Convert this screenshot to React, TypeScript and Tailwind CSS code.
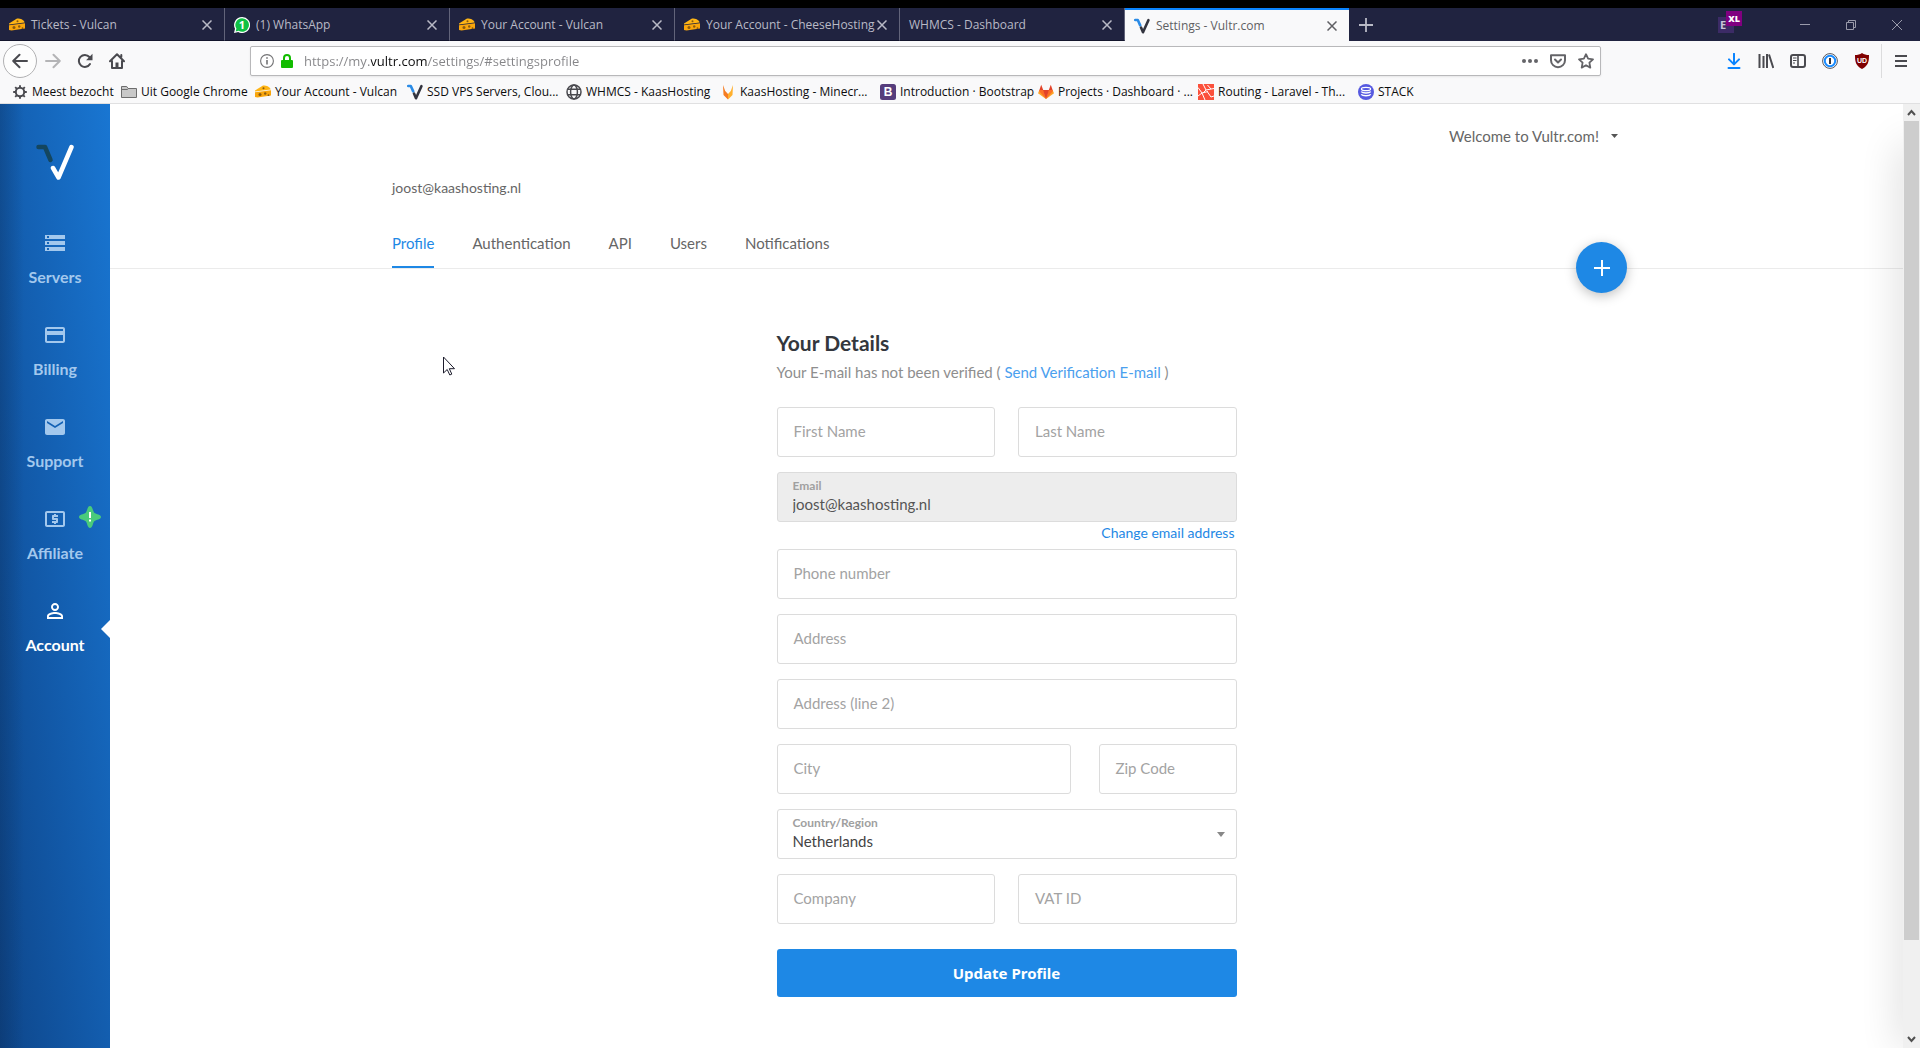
import type { ReactNode } from "react"
import { MdCreditCard, MdEmail, MdLocalAtm, MdPersonOutline, MdStorage } from "react-icons/md"

function CheeseIcon() {
    return (
        <svg viewBox="0 0 16 16" className="h-4 w-4 shrink-0">
            <path d="M0 6.5 8 1.5c4 0 7 1.5 7.6 4L0 7.5z" fill="#ffb515" />
            <path d="M0 8.2 16 6.2v5.3L2.5 13.6 0 13z" fill="#f9a60c" />
            <circle cx="8.5" cy="4.3" r="1" fill="#8a5a10" />
            <circle cx="5" cy="10.6" r="1.5" fill="#8a5a10" />
            <circle cx="10.2" cy="9.5" r="1.2" fill="#8a5a10" />
            <circle cx="13.5" cy="11.2" r="0.9" fill="#8a5a10" />
        </svg>
    )
}

function WhatsAppIcon() {
    return (
        <svg viewBox="0 0 16 16" className="h-4 w-4 shrink-0">
            <path d="M8 0a8 8 0 1 1-3.8 15L0 16l1-4.2A8 8 0 0 1 8 0z" fill="#fff" />
            <path d="M8 1.2a6.8 6.8 0 1 1-3.4 12.6L1.7 14.4l.7-2.8A6.8 6.8 0 0 1 8 1.2z" fill="#0fc144" />
            <text x="8" y="12" textAnchor="middle" fontSize="11" fontWeight="700" fill="#fff" fontFamily="Open Sans, sans-serif">1</text>
        </svg>
    )
}

function VultrIcon() {
    return (
        <svg viewBox="0 0 16 16" className="h-4 w-4 shrink-0" fill="none" strokeWidth="2.6" strokeLinecap="round" strokeLinejoin="round">
            <path d="M1.2 2h2.6l2.4 5.4" stroke="#2a8be6" />
            <path d="M7 9.6l2 4.6 5.4-12" stroke="#33343f" />
        </svg>
    )
}

function GearIcon() {
    return (
        <svg viewBox="0 0 16 16" className="h-4 w-4 shrink-0" fill="none" stroke="#4a4a4f">
            <circle cx="8" cy="8" r="4.2" strokeWidth="2" />
            <path d="M8 1.2v2.4M8 12.4v2.4M1.2 8h2.4M12.4 8h2.4M3.2 3.2l1.7 1.7M11.1 11.1l1.7 1.7M3.2 12.8l1.7-1.7M11.1 4.9l1.7-1.7" strokeWidth="1.9" />
        </svg>
    )
}

function FolderIcon() {
    return (
        <svg viewBox="0 0 16 16" className="h-4 w-4 shrink-0" fill="#c8c8c8" stroke="#6d6d6d">
            <path d="M.5 13.5v-11h5.2l1.4 2h8.4v9z" />
            <path d="M.5 5.5h6l1-1" fill="none" />
        </svg>
    )
}

function GlobeIcon() {
    return (
        <svg viewBox="0 0 16 16" className="h-4 w-4 shrink-0" fill="none" stroke="#4a4a4f" strokeWidth="1.5">
            <circle cx="8" cy="8" r="7" />
            <ellipse cx="8" cy="8" rx="3.4" ry="7" />
            <path d="M1.6 5.2h12.8M1.6 10.8h12.8" />
        </svg>
    )
}

function FoxIcon() {
    return (
        <svg viewBox="0 0 16 16" className="h-4 w-4 shrink-0">
            <path d="M3 1l2.2 6L8 10v5.5L3.5 11z" fill="#f57c22" />
            <path d="M13 1l-2.2 6L8 10v5.5l4.5-4.5z" fill="#ffb02e" />
        </svg>
    )
}

function BootstrapIcon() {
    return (
        <svg viewBox="0 0 16 16" className="h-4 w-4 shrink-0">
            <rect width="16" height="16" rx="2.5" fill="#563d7c" />
            <text x="8" y="12.4" textAnchor="middle" fontSize="12" fontWeight="700" fill="#fff" fontFamily="Liberation Sans, sans-serif">B</text>
        </svg>
    )
}

function GitlabIcon() {
    return (
        <svg viewBox="0 0 16 16" className="h-4 w-4 shrink-0">
            <path d="M0 9.2 1.4 6h13.2L16 9.2 8 15z" fill="#fca326" />
            <path d="M1.4 6h3.8L8 15 1 7z" fill="#fc6d26" />
            <path d="M14.6 6h-3.8L8 15l7-8z" fill="#fc6d26" />
            <path d="M5 6h6l-3 9zM1.4 6 3.2.8 5.2 6zM14.6 6 12.8.8 10.8 6z" fill="#e24329" />
        </svg>
    )
}

function LaravelIcon() {
    return (
        <svg viewBox="0 0 16 16" className="h-4 w-4 shrink-0">
            <rect width="16" height="16" fill="#fb503b" />
            <path d="M0 3.5 4 9l6-1.5M5 0l3 6 8-1.5M4 9l3 7M9.5 8l3.5 5 3-1M0 12l4-3M8 6l-3 3M9.5 1 13 5" fill="none" stroke="#fff" />
        </svg>
    )
}

function StackIcon() {
    return (
        <svg viewBox="0 0 16 16" className="h-4 w-4 shrink-0">
            <circle cx="8" cy="8" r="8" fill="#5659e0" />
            <ellipse cx="8" cy="5" rx="4.6" ry="1.7" fill="none" stroke="#fff" strokeWidth="1.2" />
            <path d="M3.2 7.6c1.5 1.8 8.1 1.8 9.6 0M3.2 10.4c1.5 1.8 8.1 1.8 9.6 0" fill="none" stroke="#fff" strokeWidth="1.4" />
        </svg>
    )
}

function CloseIcon() {
    return (
        <svg viewBox="0 0 10 10" className="h-[10px] w-[10px]" fill="none" stroke="currentColor" strokeWidth="1.5">
            <path d="M.5.5l9 9M9.5.5l-9 9" />
        </svg>
    )
}

interface BrowserTab {
    title: string
    icon?: ReactNode
    active?: boolean
}

const browserTabs: BrowserTab[] = [
    { title: "Tickets - Vulcan", icon: <CheeseIcon /> },
    { title: "(1) WhatsApp", icon: <WhatsAppIcon /> },
    { title: "Your Account - Vulcan", icon: <CheeseIcon /> },
    { title: "Your Account - CheeseHosting", icon: <CheeseIcon /> },
    { title: "WHMCS - Dashboard" },
    { title: "Settings - Vultr.com", icon: <VultrIcon />, active: true },
]

function TabStrip() {
    return (
        <div className="flex h-[33px] bg-[#202340] text-[#b9bac6]">
            {browserTabs.map((tab) => (
                <div
                    key={tab.title}
                    className={
                        tab.active
                            ? "flex w-56 items-center border-t-2 border-[#0a84ff] bg-[#f9f9fa] pr-3 pl-[9px] text-[#5f5f63]"
                            : "flex w-[225px] items-center border-r border-r-[#62647a] border-b border-b-[#12142b] pt-0.5 pr-3 pl-[9px]"
                    }
                >
                    {tab.icon && <span className="mr-1.5">{tab.icon}</span>}
                    <span className="flex-1 text-xs whitespace-nowrap">{tab.title}</span>
                    <button aria-label="Close tab"><CloseIcon /></button>
                </div>
            ))}
            <button aria-label="New tab" className="ml-[10px] self-center">
                <svg viewBox="0 0 14 14" className="h-[14px] w-[14px]" stroke="currentColor" strokeWidth="1.8">
                    <path d="M7 0v14M0 7h14" />
                </svg>
            </button>

            <div className="ml-auto flex items-center pr-[18px]">
                <div className="relative mr-[66px] h-4 w-4 bg-[#3c2b66]">
                    <span className="block pl-0.5 text-[11px] leading-4 font-bold text-[#c9c4d8]">E</span>
                    <span className="absolute -top-1.5 left-2 h-[15px] w-4 bg-[#800080] text-center text-[9px] leading-[15px] font-extrabold text-white">XL</span>
                </div>
                <div className="flex items-center gap-9 text-[#9a9bab]">
                    <button aria-label="Minimize">
                        <svg viewBox="0 0 10 10" className="h-[10px] w-[10px]" stroke="currentColor"><path d="M0 4.5h10" /></svg>
                    </button>
                    <button aria-label="Restore">
                        <svg viewBox="0 0 10 10" className="h-[10px] w-[10px]" fill="none" stroke="currentColor"><path d="M.5 2.5h7v7h-7zM2.5 2.5v-2h7v7h-2" /></svg>
                    </button>
                    <button aria-label="Close">
                        <svg viewBox="0 0 10 10" className="h-[10px] w-[10px]" stroke="currentColor"><path d="M0 0l10 10M10 0L0 10" /></svg>
                    </button>
                </div>
            </div>
        </div>
    )
}

function Toolbar() {
    return (
        <div className="flex h-10 items-center">
            <div className="flex items-center pl-[3px]">
                <button aria-label="Back" className="flex h-[34px] w-[34px] items-center justify-center rounded-full border border-[#b1b1b3] bg-[#fdfdfd] text-[#4a4a4f]">
                    <svg viewBox="0 0 16 16" className="h-4 w-4" fill="none" stroke="currentColor" strokeWidth="2" strokeLinecap="round" strokeLinejoin="round"><path d="M15 8H1.2M7.5 1.8 1.2 8l6.3 6.2" /></svg>
                </button>
                <button aria-label="Forward" className="ml-2 text-[#b4b4b6]">
                    <svg viewBox="0 0 16 16" className="h-4 w-4" fill="none" stroke="currentColor" strokeWidth="2" strokeLinecap="round" strokeLinejoin="round"><path d="M1 8h13.8M8.5 1.8 14.8 8l-6.3 6.2" /></svg>
                </button>
                <button aria-label="Reload" className="ml-4 text-[#4a4a4f]">
                    <svg viewBox="0 0 16 16" className="h-4 w-4" fill="none" stroke="currentColor" strokeWidth="2" strokeLinecap="round">
                        <path d="M13 11A6 6 0 1 1 12.4 4" />
                        <path d="M15.5.8v6.4H9.1z" fill="currentColor" stroke="none" />
                    </svg>
                </button>
                <button aria-label="Home" className="ml-4 text-[#4a4a4f]">
                    <svg viewBox="0 0 16 16" className="h-4 w-4" fill="none" stroke="currentColor" strokeWidth="2" strokeLinecap="round" strokeLinejoin="round">
                        <path d="M1 8.2 8 1.2l7 7M3 8v7h10V8M12.3 2v2" />
                        <path d="M6.5 15V9.5h3V15z" fill="currentColor" stroke="none" />
                    </svg>
                </button>
            </div>

            <div className="ml-[125px] flex h-[30px] flex-1 items-center rounded-[2px] border border-[#b8b8ba] bg-white pr-1.5 pl-[9px] shadow-[0_1px_2px_rgba(0,0,0,0.08)]">
                <svg viewBox="0 0 14 14" className="h-[14px] w-[14px]" fill="none" stroke="#737375">
                    <circle cx="7" cy="7" r="6.4" strokeWidth="1.1" />
                    <path d="M7 6v4.6M7 3.2v1.6" strokeWidth="1.6" />
                </svg>
                <svg viewBox="0 0 12 14" className="ml-[7px] h-[14px] w-3">
                    <path d="M3 7V4a3 3 0 0 1 6 0v3" fill="none" stroke="#12bc00" strokeWidth="2" />
                    <rect y="6" width="12" height="8" rx="1" fill="#12bc00" />
                </svg>
                <input
                    aria-label="Address"
                    defaultValue="https://my.vultr.com/settings/#settingsprofile"
                    className="ml-[11px] min-w-0 flex-1 bg-[linear-gradient(90deg,#858588_67px,#0c0c0d_67px,#0c0c0d_123px,#858588_123px)] bg-clip-text pt-0.5 text-[13px] text-transparent outline-none"
                />
                <div className="flex items-center gap-3 text-[#646468]">
                    <button aria-label="Page actions">
                        <svg viewBox="0 0 16 16" className="h-4 w-4" fill="currentColor"><circle cx="2" cy="8" r="2" /><circle cx="8" cy="8" r="2" /><circle cx="14" cy="8" r="2" /></svg>
                    </button>
                    <button aria-label="Save to Pocket">
                        <svg viewBox="0 0 16 16" className="h-4 w-4" fill="none" stroke="currentColor" strokeWidth="2" strokeLinecap="round" strokeLinejoin="round"><path d="M1 2.2h14v5a7 7 0 0 1-14 0zM5 6.5l3 3 3-3" /></svg>
                    </button>
                    <button aria-label="Bookmark this page">
                        <svg viewBox="0 0 16 16" className="h-4 w-4" fill="none" stroke="currentColor" strokeWidth="1.8" strokeLinejoin="round"><path d="M8 1.2l2.1 4.5 4.9.6-3.6 3.4.9 4.9L8 12.2l-4.3 2.4.9-4.9L1 6.3l4.9-.6z" /></svg>
                    </button>
                </div>
            </div>

            <div className="ml-[125px] flex items-center gap-4 text-[#4a4a4f]">
                <button aria-label="Downloads" className="text-[#0a84ff]">
                    <svg viewBox="0 0 16 16" className="h-4 w-4" fill="none" stroke="currentColor" strokeWidth="2" strokeLinecap="round" strokeLinejoin="round"><path d="M8 .8v10M3 6.4l5 5 5-5M2.5 15h11" /></svg>
                </button>
                <button aria-label="Library">
                    <svg viewBox="0 0 16 16" className="h-4 w-4" stroke="currentColor" strokeWidth="2"><path d="M1.5 1v14M5.5 3v12M9 1v14M11 1.5 15.3 15" /></svg>
                </button>
                <button aria-label="Sidebars">
                    <svg viewBox="0 0 16 16" className="h-4 w-4" fill="none" stroke="currentColor"><rect x="1" y="2" width="14" height="12" rx="2" strokeWidth="2" /><path d="M8 2v12" strokeWidth="1.6" /><path d="M3 5h3.5M3 7.5h3.5M3 10h2" /></svg>
                </button>
                <button aria-label="Password manager">
                    <svg viewBox="0 0 16 16" className="h-4 w-4" fill="none">
                        <circle cx="8" cy="8" r="7.4" fill="#fff" stroke="#55565c" />
                        <circle cx="8" cy="8" r="5.2" stroke="#1a8cff" strokeWidth="2" />
                        <path d="M8 5v6" stroke="#33343a" strokeWidth="2" />
                    </svg>
                </button>
                <button aria-label="Ad blocker">
                    <svg viewBox="0 0 16 16" className="h-4 w-4">
                        <path d="M8 0c2 1.4 4.4 2 7 2 0 6.5-.6 10.5-7 14C1.6 12.5 1 8.5 1 2c2.6 0 5-.6 7-2z" fill="#800000" />
                        <text x="8" y="9.6" textAnchor="middle" fontSize="7" fontWeight="700" fill="#fff" fontFamily="Liberation Sans, sans-serif">UD</text>
                    </svg>
                </button>
            </div>
            <button aria-label="Open menu" className="ml-[11px] flex h-[34px] items-center border-l border-[#dcdcdd] px-3 text-[#4a4a4f]">
                <svg viewBox="0 0 14 14" className="h-[14px] w-[14px]" stroke="currentColor" strokeWidth="2"><path d="M1 2h12M1 7h12M1 12h12" /></svg>
            </button>
        </div>
    )
}

const bookmarks = [
    { title: "Meest bezocht", icon: <GearIcon />, width: "w-[109px]" },
    { title: "Uit Google Chrome", icon: <FolderIcon />, width: "w-[134px]" },
    { title: "Your Account - Vulcan", icon: <CheeseIcon />, width: "w-[152px]" },
    { title: "SSD VPS Servers, Clou...", icon: <VultrIcon />, width: "w-[159px]" },
    { title: "WHMCS - KaasHosting", icon: <GlobeIcon />, width: "w-[154px]" },
    { title: "KaasHosting - Minecr...", icon: <FoxIcon />, width: "w-[160px]" },
    { title: "Introduction · Bootstrap", icon: <BootstrapIcon />, width: "w-[158px]" },
    { title: "Projects · Dashboard · ...", icon: <GitlabIcon />, width: "w-[160px]" },
    { title: "Routing - Laravel - Th...", icon: <LaravelIcon />, width: "w-[160px]" },
    { title: "STACK", icon: <StackIcon />, width: "w-[60px]" },
]

function BookmarksBar() {
    return (
        <div className="flex h-[23px] items-center border-b border-[#e0e0e1] pl-3 text-[#0c0c0d]">
            {bookmarks.map((item) => (
                <button key={item.title} className={`flex shrink-0 items-center gap-1 text-xs whitespace-nowrap ${item.width}`}>
                    {item.icon}
                    {item.title}
                </button>
            ))}
        </div>
    )
}

const navItems = [
    { label: "Servers", icon: MdStorage },
    { label: "Billing", icon: MdCreditCard },
    { label: "Support", icon: MdEmail },
    { label: "Affiliate", icon: MdLocalAtm, alert: true },
    { label: "Account", icon: MdPersonOutline, active: true },
]

function Sidebar() {
    return (
        <aside className="w-[110px] shrink-0 bg-[linear-gradient(90deg,rgba(10,40,80,0.3),transparent_24px),linear-gradient(to_bottom_left,#1976d2,#1259a8_60%,#0e468a)]">
            <a href="#" aria-label="Vultr" className="flex justify-center pt-10">
                <svg viewBox="0 0 38 36" className="h-9 w-[38px]" fill="none" strokeWidth="4.5" strokeLinecap="round" strokeLinejoin="round">
                    <path d="M2.5 3H9l5.5 13" stroke="#14465f" />
                    <path d="M17 24l5.5 9.5L35.5 3" stroke="#fff" />
                </svg>
            </a>
            <nav className="pt-[51px]">
                {navItems.map((item) => (
                    <a
                        key={item.label}
                        href="#"
                        className={
                            item.active
                                ? "relative flex h-[92px] flex-col items-center text-white"
                                : "relative flex h-[92px] flex-col items-center text-[#a3c8ed]"
                        }
                    >
                        <item.icon className="h-6 w-6" />
                        <span className="mt-3 text-base leading-5 font-bold">{item.label}</span>
                        {item.alert && (
                            <svg viewBox="0 0 22 22" className="absolute -top-px right-[9px] h-[22px] w-[22px]">
                                <path d="M11 0c2.5 0 2.5 4 4 6.5C17.5 8.5 22 8.500 22 11s-4.5 2.5-7 4.500C13.5 18 13.5 22 11 22s-2.5-4-4-6.5C4.5 13.5 0 13.5 0 11s4.5-2.5 7-4.5C8.5 4 8.5 0 11 0z" fill="#4acb7b" />
                                <path d="M11 6v6M11 13.500v2" stroke="#fff" strokeWidth="2" />
                            </svg>
                        )}
                        {item.active && (
                            <svg viewBox="0 0 9 18" className="absolute top-[21px] right-0 h-[18px] w-[9px]" fill="#fff"><path d="M9 0v18L0 9z" /></svg>
                        )}
                    </a>
                ))}
            </nav>
        </aside>
    )
}

const settingsTabs = ["Profile", "Authentication", "API", "Users", "Notifications"]

function AccountHeader() {
    return (
        <header className="border-b border-[#ebebeb]">
            <div className="relative mx-auto max-w-[1229px]">
                <div className="flex justify-end pt-[22px] pr-[3px]">
                    <button className="flex items-center gap-3 text-[15px] leading-5 text-[#666]">
                        Welcome to Vultr.com!
                        <svg viewBox="0 0 7 4" className="h-1 w-[7px]" fill="#555"><path d="M0 0h7L3.5 4z" /></svg>
                    </button>
                </div>
                <p className="mt-8 text-sm leading-5 text-[#666]">joost@kaashosting.nl</p>
                <nav className="mt-[35px] flex gap-[38px]">
                    {settingsTabs.map((tab) => (
                        <a
                            key={tab}
                            href="#"
                            className={
                                tab === "Profile"
                                    ? "border-b-2 border-[#1e88e5] pb-[13px] text-[15px] leading-5 text-[#1e88e5]"
                                    : "pb-[13px] text-[15px] leading-5 text-[#666]"
                            }
                        >
                            {tab}
                        </a>
                    ))}
                </nav>
                <button aria-label="Deploy" className="absolute -right-1.5 -bottom-[25px] flex h-[51px] w-[51px] items-center justify-center rounded-full bg-[#1e88e5] shadow-[0_3px_12px_rgba(0,0,0,0.25)]">
                    <svg viewBox="0 0 16 16" className="h-4 w-4" stroke="#fff" strokeWidth="2"><path d="M8 0v16M0 8h16" /></svg>
                </button>
            </div>
        </header>
    )
}

function Field({ id, label }: { id: string; label: string }) {
    return (
        <div className="relative min-w-0">
            <input
                id={id}
                placeholder=" "
                className="peer block h-[50px] w-full rounded-[3px] border border-[#dcdcdc] bg-white px-4 text-[15px] text-[#444] outline-none"
            />
            <label
                htmlFor={id}
                className="pointer-events-none absolute top-[14px] left-[17px] text-[15px] leading-5 text-[#a3a3a3] peer-[:not(:placeholder-shown)]:top-1 peer-[:not(:placeholder-shown)]:text-xs"
            >
                {label}
            </label>
        </div>
    )
}

function ProfileForm() {
    return (
        <form className="mx-auto w-full max-w-[460px] pt-[62px]">
            <h1 className="text-[21px] leading-6 font-bold text-[#33373d]">Your Details</h1>
            <p className="mt-[7px] text-[15px] leading-5 text-[#8e8e8e]">
                Your E-mail has not been verified ( <a href="#" className="text-[#4ba0ee]">Send Verification E-mail</a> )
            </p>

            <div className="mt-[25px] grid gap-[15px]">
                <div className="grid grid-cols-2 gap-[23px]">
                    <Field id="first-name" label="First Name" />
                    <Field id="last-name" label="Last Name" />
                </div>
                <div>
                    <div className="flex h-[50px] flex-col rounded-[3px] border border-[#dcdcdc] bg-[#ededed] px-[15px] pt-[5px]">
                        <label htmlFor="email" className="text-xs leading-4 font-bold text-[#a0a0a0]">Email</label>
                        <input id="email" readOnly defaultValue="joost@kaashosting.nl" className="h-5 text-[15px] leading-5 text-[#555] outline-none" />
                    </div>
                    <div className="-mb-[15px] flex h-[27px] items-center justify-end pr-0.5 pb-1.5">
                        <a href="#" className="text-sm leading-4 text-[#1e88e5]">Change email address</a>
                    </div>
                </div>
                <Field id="phone" label="Phone number" />
                <Field id="address" label="Address" />
                <Field id="address2" label="Address (line 2)" />
                <div className="grid grid-cols-[1fr_30%] gap-7">
                    <Field id="city" label="City" />
                    <Field id="zip" label="Zip Code" />
                </div>
                <div className="relative flex h-[50px] flex-col rounded-[3px] border border-[#dcdcdc] pt-[5px]">
                    <label htmlFor="country" className="px-[15px] text-xs leading-4 font-bold text-[#a0a0a0]">Country/Region</label>
                    <select id="country" className="h-5 appearance-none px-[15px] text-[15px] leading-5 text-[#444] outline-none">
                        <option>Netherlands</option>
                    </select>
                    <svg viewBox="0 0 8 5" className="pointer-events-none absolute top-[22px] right-[11px] h-[5px] w-2" fill="#888"><path d="M0 0h8L4 5z" /></svg>
                </div>
                <div className="grid grid-cols-2 gap-[23px]">
                    <Field id="company" label="Company" />
                    <Field id="vat" label="VAT ID" />
                </div>
            </div>

            <button type="button" className="mt-[25px] h-12 w-full rounded-[3px] bg-[#1e88e5] font-['Noto_Sans',sans-serif] text-[15px] font-bold text-white">
                Update Profile
            </button>
        </form>
    )
}

function ScrollBar() {
    return (
        <div className="flex w-[17px] shrink-0 flex-col items-center bg-[#f0f0f0]">
            <svg viewBox="0 0 17 17" className="h-[17px] w-[17px]" fill="none" stroke="#505050" strokeWidth="2"><path d="M5 11l3.5-4 3.5 4" /></svg>
            <div className="w-[15px] flex-[819] bg-[#cdcdcd]" />
            <div className="flex-[91]" />
            <svg viewBox="0 0 17 17" className="h-[17px] w-[17px]" fill="none" stroke="#505050" strokeWidth="2"><path d="M5 6l3.5 4 3.5-4" /></svg>
        </div>
    )
}

export default function App() {
    return (
        <div className="flex min-h-screen flex-col bg-white font-['Lato',sans-serif]">
            <div className="bg-[#f9f9fa] font-['Open_Sans',sans-serif]">
                <div className="h-2 bg-black" />
                <TabStrip />
                <Toolbar />
                <BookmarksBar />
            </div>

            <div className="flex flex-1">
                <Sidebar />
                <main className="relative min-w-0 flex-1 overflow-hidden bg-white">
                    <AccountHeader />
                    <ProfileForm />
                    {/* shadow of the drawer parked past the right edge */}
                    <div className="pointer-events-none absolute top-10 -right-5 bottom-0 w-5 shadow-[0_0_40px_rgba(0,0,0,0.2)]" />
                    <svg viewBox="0 0 12 20" className="pointer-events-none absolute top-[252px] left-[333px] h-5 w-3" fill="#fff" stroke="#1c1c2c" strokeLinejoin="round">
                        <path d="M.5 1v16l3.700-3.5 2.6 5.5 2-.9-2.5-5.400h5.200z" />
                    </svg>
                </main>
                <ScrollBar />
            </div>
        </div>
    )
}
